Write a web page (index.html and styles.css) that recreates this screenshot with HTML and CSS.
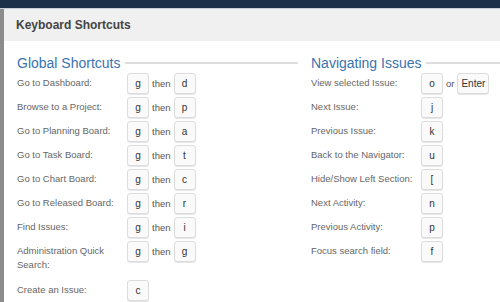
FILE: index.html
```html
<!DOCTYPE html>
<html lang="en">
<head>
    <meta charset="UTF-8">
    <title>Keyboard Shortcuts</title>
    <link rel="stylesheet" href="styles.css">
</head>
<body>
    <div class="topbar"></div>
    <div class="page">
        <div class="backdrop"></div>
        <div class="dialog">
            <div class="dialog-header">Keyboard Shortcuts</div>
            <div class="dialog-body">
                <div class="column column-left">
                    <h2 class="section-title"><span>Global Shortcuts</span></h2>
                    <div class="row"><div class="label">Go to Dashboard:</div><div class="keys"><kbd>g</kbd><span class="sep">then</span><kbd>d</kbd></div></div>
                    <div class="row"><div class="label">Browse to a Project:</div><div class="keys"><kbd>g</kbd><span class="sep">then</span><kbd>p</kbd></div></div>
                    <div class="row"><div class="label">Go to Planning Board:</div><div class="keys"><kbd>g</kbd><span class="sep">then</span><kbd>a</kbd></div></div>
                    <div class="row"><div class="label">Go to Task Board:</div><div class="keys"><kbd>g</kbd><span class="sep">then</span><kbd>t</kbd></div></div>
                    <div class="row"><div class="label">Go to Chart Board:</div><div class="keys"><kbd>g</kbd><span class="sep">then</span><kbd>c</kbd></div></div>
                    <div class="row"><div class="label">Go to Released Board:</div><div class="keys"><kbd>g</kbd><span class="sep">then</span><kbd>r</kbd></div></div>
                    <div class="row"><div class="label">Find Issues:</div><div class="keys"><kbd>g</kbd><span class="sep">then</span><kbd>i</kbd></div></div>
                    <div class="row"><div class="label label-wrap">Administration Quick Search:</div><div class="keys"><kbd>g</kbd><span class="sep">then</span><kbd>g</kbd></div></div>
                    <div class="row"><div class="label">Create an Issue:</div><div class="keys"><kbd>c</kbd></div></div>
                </div>
                <div class="column column-right">
                    <h2 class="section-title"><span>Navigating Issues</span></h2>
                    <div class="row"><div class="label">View selected Issue:</div><div class="keys"><kbd>o</kbd><span class="sep">or</span><kbd>Enter</kbd></div></div>
                    <div class="row"><div class="label">Next Issue:</div><div class="keys"><kbd>j</kbd></div></div>
                    <div class="row"><div class="label">Previous Issue:</div><div class="keys"><kbd>k</kbd></div></div>
                    <div class="row"><div class="label">Back to the Navigator:</div><div class="keys"><kbd>u</kbd></div></div>
                    <div class="row"><div class="label">Hide/Show Left Section:</div><div class="keys"><kbd>[</kbd></div></div>
                    <div class="row"><div class="label">Next Activity:</div><div class="keys"><kbd>n</kbd></div></div>
                    <div class="row"><div class="label">Previous Activity:</div><div class="keys"><kbd>p</kbd></div></div>
                    <div class="row"><div class="label">Focus search field:</div><div class="keys"><kbd>f</kbd></div></div>
                </div>
            </div>
        </div>
    </div>
</body>
</html>
```

FILE: styles.css
```css
body {
    margin: 0;
    padding: 0;
    font-family: "Liberation Sans", Arial, sans-serif;
    background-color: #7a7d80;
    overflow: hidden;
}

.topbar {
    height: 8px;
    background-color: #1d3049;
    border-bottom: 1px solid #c9ced4;
}

.page {
    display: flex;
    height: 293px;
}

.backdrop {
    width: 4px;
    background-color: #8a8c8e;
}

.dialog {
    flex: 1;
    background-color: #ffffff;
}

.dialog-header {
    height: 32px;
    line-height: 32px;
    padding-left: 12px;
    background-color: #f0f0f0;
    color: #444;
    font-size: 12px;
    font-weight: bold;
}

.dialog-body {
    display: flex;
    padding: 12px 0 0 13px;
}

.column-left {
    width: 281px;
    margin-right: 13px;
}

.column-right {
    flex: 1;
}

.section-title {
    display: flex;
    align-items: center;
    margin: 0;
    font-size: 14px;
    font-weight: normal;
    color: #3b73af;
    height: 20px;
}

.section-title::after {
    content: "";
    flex: 1;
    height: 2px;
    margin-left: 4px;
    background-color: #dddddd;
}

.row {
    display: flex;
    align-items: flex-start;
    margin-bottom: 3px;
}

.label {
    width: 110px;
    flex-shrink: 0;
    padding-right: 6px;
    box-sizing: border-box;
    font-size: 9.5px;
    line-height: 12px;
    padding-top: 4px;
    color: #666;
}

.label-wrap {
    line-height: 14px;
    padding-top: 3px;
    padding-bottom: 5px;
}

.keys {
    display: flex;
    align-items: center;
}

kbd {
    display: inline-block;
    min-width: 14px;
    height: 19px;
    line-height: 19px;
    padding: 0 3px;
    box-sizing: content-box;
    text-align: center;
    border: 1px solid #dcdcdc;
    border-radius: 3px;
    background-color: #fafafa;
    box-shadow: 0 1px 0 #e6e6e6;
    font-family: "Liberation Sans", Arial, sans-serif;
    font-size: 10px;
    color: #333;
}

.sep {
    font-size: 9.5px;
    color: #555;
    padding: 0 3px;
}
```
